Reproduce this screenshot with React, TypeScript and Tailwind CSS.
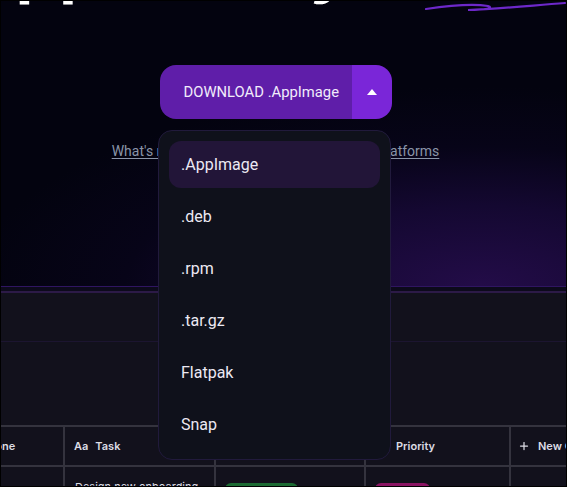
import { Plus, CircleChevronDown, Loader, CircleCheck } from 'lucide-react';

const formats = ['.AppImage', '.deb', '.rpm', '.tar.gz', 'Flatpak', 'Snap'];

const columns = [
  { name: 'Milestone', icon: 'done', w: 'w-[151px]' },
  { name: 'Task', icon: 'Aa', w: 'w-[151px]' },
  { name: 'Status', icon: 'status', w: 'w-[150px]' },
  { name: 'Priority', icon: 'priority', w: 'w-[145px]' },
];

export default function App() {
  return (
    <div className="relative w-[567px] h-[487px] overflow-hidden border border-black bg-[#03030f] font-['Roboto',sans-serif]">
      {/* Hero */}
      <section className="relative flex flex-col h-[285px] bg-[radial-gradient(ellipse_90%_70%_at_85%_100%,#230c48_0%,#140831_40%,#070418_70%,#03030f_100%)]">
        <h1 className="mt-[-65px] ml-[-36px] text-[64px] leading-[64px] font-bold tracking-[3px] text-white whitespace-nowrap font-['Inter',sans-serif]">
          Apps today
        </h1>
        {/* scribble under headline */}
        <svg className="absolute right-0 top-0" width="170" height="14" viewBox="0 0 170 14">
          <path
            d="M30 8 C 50 5, 75 2, 92 5 C 98 7, 90 9, 72 9 C 100 8, 130 5, 169 2"
            fill="none"
            stroke="#6d28c9"
            strokeWidth="2.2"
            strokeLinecap="round"
          />
        </svg>

        <div className="flex flex-col items-center pr-[16px] mt-[65px]">
          <div className="flex h-[54px] w-[232px] rounded-[16px] overflow-hidden">
            <button className="w-[192px] shrink-0 bg-[#5f1ea9] text-[#f1ecfb] text-[14.8px] pl-[24px] text-left whitespace-nowrap">
              DOWNLOAD .AppImage
            </button>
            <button className="w-[40px] shrink-0 bg-[#7a26d8] flex items-center justify-center">
              <span className="w-0 h-0 border-l-[5px] border-r-[5px] border-b-[6px] border-l-transparent border-r-transparent border-b-white" />
            </button>
          </div>
          <a className="mt-[24px] text-[14px] leading-[16px] text-[#8a94a8] underline underline-offset-2 decoration-[#8a94a8] whitespace-nowrap">
            What's new in v1.4.2 · Downloads for other platforms
          </a>
        </div>
      </section>

      <div className="h-[1px] bg-[#2f1561]" />
      <div className="h-[4px] bg-[#0c0a1b]" />
      <div className="h-[2px] bg-[#2c1a47]" />

      {/* Lower panel */}
      <div className="bg-[#12111c] h-[195px]">
        <div className="h-[49px] border-b border-[#1c1530]" />
        <div className="h-[83px]" />
        <div className="ml-[-87px] font-['Inter',sans-serif]">
          <div className="flex border-t-2 border-b-2 border-[#34333e] h-[42px]">
            {columns.map((c) => (
              <div
                key={c.name}
                className={`${c.w} shrink-0 border-r-2 border-[#34333e] flex items-center pl-[9px] gap-[7px] text-[11px] font-semibold text-[#dcdce4]`}
              >
                {c.icon === 'Aa' && <span className="font-semibold">Aa</span>}
                {c.icon === 'done' && <CircleCheck size={14} className="ml-[19px]" />}
                {c.icon === 'status' && <Loader size={14} />}
                {c.icon === 'priority' && <CircleChevronDown size={14} />}
                <span>{c.name}</span>
              </div>
            ))}
            <div className="flex items-center pl-[7px] gap-[8px] text-[11px] font-semibold text-[#dcdce4] whitespace-nowrap">
              <Plus size={12} strokeWidth={2.5} />
              <span>New Column</span>
            </div>
          </div>
          <div className="flex h-[40px]">
            <div className="w-[151px] shrink-0 border-r-2 border-[#34333e]" />
            <div className="w-[151px] shrink-0 border-r-2 border-[#34333e] pl-[10px] pt-[12px] text-[11px] text-[#dcdce4] whitespace-nowrap">
              Design new onboarding
            </div>
            <div className="w-[150px] shrink-0 border-r-2 border-[#34333e] pl-[9px] pt-[11px]">
              <span className="inline-block rounded-[6px] bg-[#1c6b33] w-[73px] h-[18px] text-[10px] text-[#9fe7b4] text-center leading-[18px]">
                Completed
              </span>
            </div>
            <div className="w-[145px] shrink-0 border-r-2 border-[#34333e] pl-[9px] pt-[11px]">
              <span className="inline-block rounded-[6px] bg-[#8a1463] w-[55px] h-[18px] text-[10px] text-[#f5c0df] text-center leading-[18px]">
                High
              </span>
            </div>
          </div>
        </div>
      </div>

      {/* Format dropdown */}
      <div className="absolute left-[157px] top-[129px] w-[233px] h-[330px] rounded-[14px] border border-[#211a3c] bg-[#0f111b] p-[10px] flex flex-col gap-[5px]">
        {formats.map((f, i) => (
          <div
            key={f}
            className={
              i === 0
                ? 'h-[47px] shrink-0 rounded-[12px] bg-[#221538] flex items-center pl-[12px] text-[16px] text-[#ece9f3]'
                : 'h-[47px] shrink-0 rounded-[12px] flex items-center pl-[12px] text-[16px] text-[#ece9f3]'
            }
          >
            {f}
          </div>
        ))}
      </div>
    </div>
  );
}
